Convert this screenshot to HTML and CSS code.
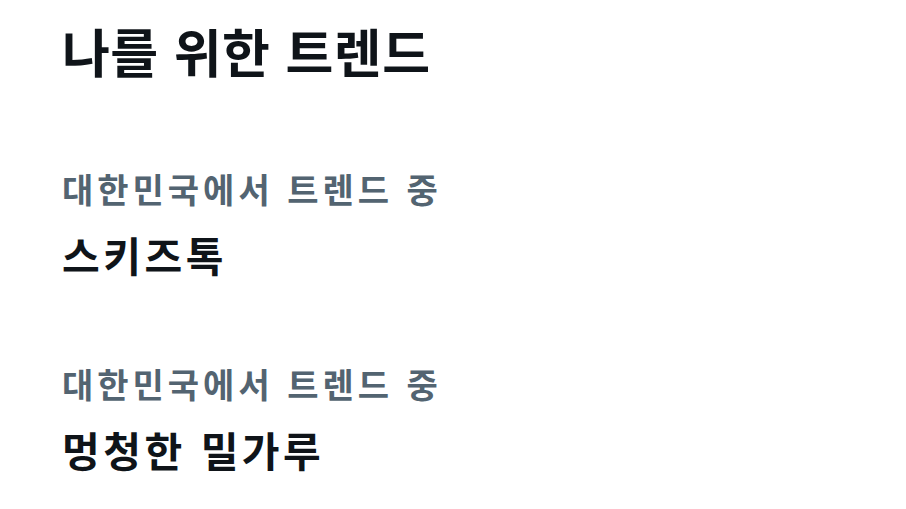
FILE: index.html
```html
<!DOCTYPE html>
<html lang="ko">
<head>
    <meta charset="utf-8">
    <title>나를 위한 트렌드</title>
    <link rel="stylesheet" href="styles.css">
</head>
<body>
    <section class="trends">
        <h2 class="trends-title">나를 위한 트렌드</h2>

        <div class="trend-item">
            <div class="trend-meta">대한민국에서 트렌드 중</div>
            <div class="trend-name">스키즈톡</div>
        </div>

        <div class="trend-item">
            <div class="trend-meta">대한민국에서 트렌드 중</div>
            <div class="trend-name">멍청한 밀가루</div>
        </div>
    </section>
</body>
</html>
```

FILE: styles.css
```css
body {
    margin: 0;
    background-color: #ffffff;
    font-family: "Noto Sans CJK KR", "Noto Sans", sans-serif;
}
.trends {
    padding: 11px 62px 0;
}
.trends-title {
    margin: 0 0 73px;
    font-size: 52px;
    font-weight: 700;
    line-height: 80px;
    letter-spacing: 0.5px;
    color: #0f1419;
}
.trend-item {
    margin-bottom: 75px;
}
.trend-item:last-child {
    margin-bottom: 0;
}
.trend-meta {
    font-size: 34px;
    font-weight: 600;
    line-height: 50px;
    letter-spacing: 4px;
    color: #536471;
}
.trend-name {
    margin-top: 10px;
    font-size: 41px;
    font-weight: 700;
    line-height: 60px;
    letter-spacing: 3.5px;
    color: #0f1419;
}
```
